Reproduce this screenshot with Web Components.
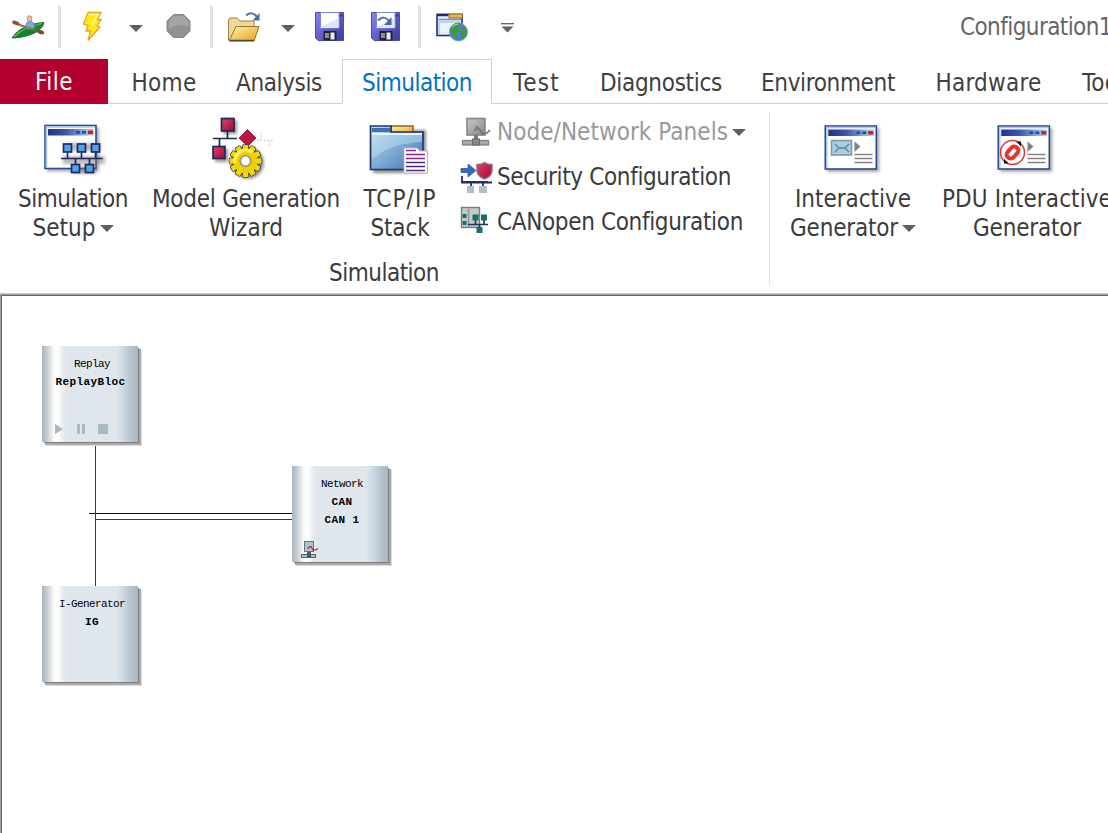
<!DOCTYPE html>
<html lang="en">
<head>
<meta charset="utf-8">
<title>Configuration1</title>
<style>
html,body{margin:0;padding:0;background:#fff}
body{width:1108px;height:833px;overflow:hidden}
</style>
</head>
<body>
<sim-app></sim-app>
<script>
const define = (name, html, init) => {
  const tpl = document.createElement('template');
  tpl.innerHTML = html;
  customElements.define(name, class extends HTMLElement {
    connectedCallback() {
      if (this.shadowRoot) return;
      this.attachShadow({mode: 'open'}).append(tpl.content.cloneNode(true));
      if (init) init(this, this.shadowRoot);
    }
  });
};

/* Text set to a given advance width by tracking. */
define('fit-text', `<style>:host{display:inline-block;white-space:pre;flex:none}span{display:inline-block}</style><span><slot></slot></span>`, (el, root) => {
  const s = root.querySelector('span'), w = +el.getAttribute('w');
  const natural = s.getBoundingClientRect().width;
  s.style.letterSpacing = ((w - natural) / el.textContent.length) + 'px';
  el.style.width = w + 'px';
});

define('drop-arrow', `<style>:host{display:block;flex:none;width:14px;height:7px}svg{display:block}</style><svg width="14" height="7"><path d="M0 0H14L7 7Z" fill="#606060"/></svg>`);
define('bar-separator', `<style>:host{display:block;flex:none;width:3px;height:42px;background:#e1e1e1}</style>`);

const win = (x, y) => `
<rect x="${x+2}" y="${y+2}" width="52" height="44" fill="#555" opacity=".5" filter="url(#b)"/>
<rect x="${x}" y="${y}" width="51" height="43" fill="#fff" stroke="#2a4a94" stroke-width="1.6"/>
<path d="M${x+1.5} ${y+42}V${y+1.5}H${x+50}" fill="none" stroke="#a9c8ee" stroke-width="1.6"/>
<rect x="${x+3}" y="${y+3.5}" width="46" height="6.5" fill="url(#t)"/>
<rect x="${x+31}" y="${y+5.5}" width="4" height="2.6" fill="#1d50a8"/><rect x="${x+37}" y="${y+5.5}" width="4" height="2.6" fill="#1d50a8"/><rect x="${x+43}" y="${y+5}" width="5" height="3.6" fill="#c8281c"/>`;
const defs = `<defs>
<filter id="b" x="-30%" y="-30%" width="160%" height="160%"><feGaussianBlur stdDeviation="1.5"/></filter>
<linearGradient id="t"><stop offset="0" stop-color="#242f8e"/><stop offset=".4" stop-color="#3c58ad"/><stop offset="1" stop-color="#b8dcfb"/></linearGradient>
<linearGradient id="g" x1="0" y1="0" x2="1" y2="1"><stop offset="0" stop-color="#c6e2ee"/><stop offset=".5" stop-color="#7fabd3"/><stop offset="1" stop-color="#3f72af"/></linearGradient>
<linearGradient id="y" x1="0" y1="0" x2="1" y2="1"><stop offset="0" stop-color="#fff3a8"/><stop offset="1" stop-color="#e8a01d"/></linearGradient>
<linearGradient id="r" x1="0" y1="0" x2="1" y2="1"><stop offset="0" stop-color="#d04a6c"/><stop offset="1" stop-color="#b00030"/></linearGradient>
<linearGradient id="p" x1="0" y1="0" x2="1" y2="1"><stop offset="0" stop-color="#8588ee"/><stop offset=".6" stop-color="#5a58c0"/><stop offset="1" stop-color="#3d3a98"/></linearGradient>
<linearGradient id="s" x1="0" y1="0" x2="1" y2="1"><stop offset="0" stop-color="#c9c9c9"/><stop offset="1" stop-color="#858585"/></linearGradient>
</defs>`;
const sq = (x, y, s, f) => `<rect x="${x}" y="${y}" width="${s}" height="${s}" fill="${f}" stroke="#22275c" stroke-width="1.7"/>`;
const floppy = (x, extra) => `<path d="M${x} 12.5H${x+28}V40.500H${x+2.500}L${x} 38Z" fill="url(#p)" stroke="#4c4ab0"/><rect x="${x+5}" y="12.500" width="18.500" height="15.500" fill="#fff" stroke="#7c80d8"/><path d="M${x+5} 27L${x+23} 18V28H${x+5}Z" fill="#dde6f8"/><rect x="${x+8}" y="31" width="13" height="9.500" fill="#23242c"/><rect x="${x+15}" y="32.500" width="4" height="7" fill="#eee"/><rect x="${x+9.500}" y="33" width="4" height="5" fill="#8b8f99"/><rect x="${x+25}" y="14.500" width="2" height="2" fill="#24246a"/>${extra}`;
let teeth = '';
for (let i = 0; i < 12; i++) teeth += `<rect x="242.800" y="145" width="5.400" height="7" rx="1" transform="rotate(${i*30} 245.500 161)"/>`;

const icons = {
kayak: [12, 12, 32, 30, `<path d="M14 23L42 32" stroke="#8d5a36" stroke-width="1.800"/><ellipse cx="16" cy="23" rx="4" ry="1.900" transform="rotate(20 16 23)" fill="#8a5731"/><path d="M12 38C18 28 32 23 44 22.500C42 33 24 38 12 38Z" fill="#17862b" stroke="#185426" stroke-width=".8"/><path d="M14 36.800C22 29 33 25 42 23.500" stroke="#6aba6c" stroke-width="1.200" fill="none"/><path d="M25 27L27 22.500Q30 20.500 33 22.500L35 27Q30 31 25 28Z" fill="#75aee5" stroke="#4779b3" stroke-width=".8"/><ellipse cx="29.600" cy="18.800" rx="2.300" ry="3.100" fill="#e9c7a2" stroke="#8e6b4d" stroke-width=".7"/><path d="M20 25.500L35 29.500" stroke="#a87047" stroke-width="1.700"/><ellipse cx="40.500" cy="32" rx="3.800" ry="2.100" transform="rotate(18 40.500 32)" fill="#86492c"/>`],
bolt: [83, 12, 20, 30, `<path d="M88 12.500H101L97.500 19.500H101L97 26L100 27L88 40.500L90.500 31H86L88 25.500L83.500 24Z" fill="#ffe918" stroke="#e8a51b" stroke-width="1.300"/><path d="M89 14.500H98L92 25" fill="none" stroke="#fffbb5" stroke-width="1.500"/>`],
stop: [167, 14, 24, 24, `<path d="M173.500 14.500H183.500L190 21V31L183.500 37.500H173.500L167 31V21Z" fill="#929292" stroke="#888"/><path d="M174 16H183L188.500 22V27Q178 22 169 29V21Z" fill="#a5a5a5"/>`],
open: [228, 12, 32, 30, `<path d="M228.500 40V20L230 18H237L240 21H254V40Z" fill="#f1d893" stroke="#a18047"/><path d="M229 41L236 26.500H259L254 41Z" fill="url(#y)" stroke="#98722e"/><path d="M230 40.500H254" stroke="#4d4632" stroke-width="1.500"/><path d="M246 15.500Q252 10.500 257 17" fill="none" stroke="#51739f" stroke-width="2"/><path d="M259.500 13V20.500H252.500Z" fill="#4a6e9f"/>`],
save: [315, 12, 30, 30, floppy(315.5, '')],
saveas: [371, 12, 30, 30, floppy(371.5, '<path d="M378 20.500Q384 14.500 389 21" fill="none" stroke="#5470a0" stroke-width="2"/><path d="M391.500 17V25H384Z" fill="#4b679c"/>')],
globe: [435, 12, 34, 30, `<rect x="437" y="14.500" width="25" height="21" fill="#e8f1fc" stroke="#27306f" stroke-width="1.600"/><rect x="449" y="14" width="13.500" height="4" fill="#f2b63b" stroke="#8a6a24"/><path d="M437 15H448" stroke="#1d2a74" stroke-width="2.500"/><path d="M438.500 19.500H461" stroke="#6a94cd" stroke-width="1.500"/><path d="M439 34V22H460" fill="none" stroke="#bdd3ef" stroke-width="2"/><circle cx="458.500" cy="32" r="9" fill="#4b82c6" stroke="#7693b8" stroke-width=".8"/><path d="M451 27Q455 22 460 23L458 27L461 30L457 32L457 39Q452 34 450 31ZM463 26L467 30L466 37L462 39L461 33Z" fill="#3c9a3d"/><path d="M452 27Q455 24 458 24" stroke="#b9dda9" fill="none"/>`],
more: [501, 23, 13, 10, `<path d="M501 23.700H514" stroke="#606060" stroke-width="1.300"/><path d="M501.500 26.500H513.500L507.500 32.500Z" fill="#606060"/>`],
setup: [41, 116, 64, 64, win(45, 125.5) + `<g stroke="#777" opacity=".5" filter="url(#b)" stroke-width="3"><path d="M63 160H105M66 147H101M73 170H96" stroke-width="8"/></g><path d="M61 158.500H102.500M67.500 153V158M81.500 153V158M95.500 153V158M75.500 158V164M89.500 158V164" stroke="#22275c" stroke-width="1.700"/>` + sq(63.5,144,8,'#49a5ec') + sq(77.5,144,8,'#49a5ec') + sq(91.500,144,8,'#49a5ec') + sq(71.500,164.500,8,'#49a5ec') + sq(85.500,164.500,8,'#49a5ec')],
wizard: [214, 116, 64, 64, `<g opacity=".4" filter="url(#b)"><rect x="223" y="120" width="14" height="14"/><rect x="215" y="149" width="13" height="13"/><circle cx="248" cy="163" r="16"/></g><path d="M213 138.500H237M227.500 131V138M219.500 138V146" stroke="#22275c" stroke-width="1.700"/>${sq(221.500,118.500,12.500,'url(#r)')}${sq(213,146.500,12,'url(#r)')}<path d="M247.500 129.500L256 138L247.500 146.500L239 138Z" fill="#b9183e" stroke="#7a1b42" stroke-width=".8"/><path d="M261 132V141M257 140.500H274M269.500 141V148" stroke="#ccc" stroke-width="1.300" stroke-dasharray="1.500 2"/><g fill="#f2d900" stroke="#38355c" stroke-width="1.500">${teeth}<circle cx="245.500" cy="161" r="12.500"/></g><g fill="#f2d900">${teeth}</g><circle cx="245.500" cy="161" r="12" fill="#edd200"/><path d="M235 163A11 11 0 0 1 252 152" fill="none" stroke="#fff35a" stroke-width="3"/><circle cx="245.500" cy="161" r="6" fill="#8a8378"/><circle cx="245.500" cy="161" r="4.500" fill="#fff" stroke="#c8c8d0"/>`],
folder: [368, 116, 64, 64, `<rect x="373" y="130" width="53" height="43" opacity=".45" filter="url(#b)"/><rect x="391" y="126" width="22" height="8" fill="url(#y)" stroke="#8f6419" stroke-width="1.500"/><path d="M370.500 169.500V126H391V132H423V169.500Z" fill="url(#g)" stroke="#23356f" stroke-width="1.700"/><path d="M372 128H390V132H372Z" fill="#416eb2"/><path d="M372 134H422" stroke="#e6f4fc" stroke-width="1.800"/><path d="M372 159Q392 143 422 142V135H372Z" fill="#c3e2f0" opacity=".45"/><path d="M404 173V148H417L420 151H427.500V173Z" fill="#fff" stroke="#b5b5c2"/><path d="M406 150.500H416M406 154.500H425M406 158.500H425" stroke="#8a2583" stroke-width="1.500"/><path d="M406 162.500H425M406 166.500H425M406 170.500H425" stroke="#4c2c79" stroke-width="1.500"/>`],
ig: [821, 116, 64, 64, win(825.3, 126) + `<rect x="831.500" y="140.500" width="20" height="14.500" fill="#a9cde4" stroke="#7d98aa" stroke-width="1.600"/><path d="M835 144L839 148H845L849 144M835 152L839 148M849 152L845 148" fill="none" stroke="#627f94" stroke-width="1.300"/><path d="M854.500 141.500V152L860.500 146.500Z" fill="#808080"/><path d="M854.500 154.500H872.500M854.500 158.500H872.500M854.500 162.500H872.500" stroke="#858585" stroke-width="1.500"/>`],
pdu: [995, 116, 64, 64, win(998.3, 126) + `<path d="M1027.500 141.500V152L1033.500 146.500Z" fill="#808080"/><path d="M1027.500 154.500H1045.500M1027.500 158.500H1045.500M1027.500 162.500H1045.500" stroke="#858585" stroke-width="1.500"/><circle cx="1012.500" cy="152.500" r="12" fill="#fff" stroke="#e83531" stroke-width="1.500"/><rect x="1008.500" y="146" width="8" height="13" rx="3.500" transform="rotate(42 1012.500 152.500)" fill="#fff" stroke="#e83531" stroke-width="4"/><path d="M1016 141.500H1021V146.500ZM1004 159V163.500H1009Z" fill="#111"/>`],
panels: [461, 117, 32, 32, `<rect x="467" y="118.500" width="18" height="16.500" fill="url(#s)" stroke="#858585" stroke-width="1.600"/><path d="M476 135V141" stroke="#777" stroke-width="4"/><rect x="462.500" y="140.500" width="26" height="4.500" fill="#aaa" stroke="#848484" stroke-width="1.300"/><rect x="472.500" y="139" width="7" height="6" fill="#888" stroke="#666"/><path d="M474.500 131L477 127L480 130L483 134L487 133L490 130" fill="none" stroke="#767676" stroke-width="1.700"/>`],
security: [461, 161, 32, 32, `<path d="M461 167.500H468V163L476 169.500L468 176V171.500H461Z" fill="#326bc7" stroke="#2450a4" stroke-width=".7"/><path d="M462 175V181.500H492M462 181H488M471 181V185M483 181V185" fill="none" stroke="#29296f" stroke-width="1.800"/><path d="M477 163.500Q481 164 484.500 161.500Q488 164 492 163.500V169Q492 175 484.500 178Q477 175 477 169Z" fill="url(#r)" stroke="#8b6a7b" stroke-width="1.500"/><rect x="467" y="185" width="7" height="7" fill="#aabfcb"/><rect x="479" y="185" width="8" height="7" fill="#b3bfc7"/>`],
canopen: [461, 206, 32, 32, `<rect x="461.500" y="206.500" width="18" height="20" fill="#c6c9ca" stroke="#777c7d" stroke-width="1.400"/><path d="M468.500 208V226" stroke="#929797" stroke-width="1.500"/><rect x="462.500" y="213" width="4" height="4" fill="#147268"/><rect x="462.500" y="220" width="4" height="4" fill="#147268"/><path d="M468 223.500H488M475.500 218V223M484 218V223M479.500 223V227" stroke="#27305c" stroke-width="1.700"/><rect x="472.500" y="213.500" width="6" height="6" fill="#147268"/><rect x="481" y="213.500" width="6" height="6" fill="#147268"/><rect x="476.500" y="226" width="6" height="6" fill="#147268"/>`],
monitor: [301, 541, 18, 18, `<rect x="304.500" y="541.500" width="9" height="10" fill="#a9c8d6" stroke="#68757c"/><rect x="301.500" y="554.500" width="14" height="3" fill="#a3bfcb" stroke="#59656c"/><path d="M309 552V557" stroke="#4b5960" stroke-width="4"/><path d="M308 549V548L310 546.500H311L313 550H316L318 548.500" fill="none" stroke="#c0172e" stroke-width="1.200"/>`],
transport: [55, 424, 54, 10, `<path d="M55 424V434L63 429Z" fill="#a9b9c3"/><path d="M77 424H80V434H77ZM82 424H85V434H82ZM98 424H108V434H98Z" fill="#a9b9c3"/>`]
};
define('app-icon', `<style>:host{display:block;flex:none}svg{display:block;overflow:visible}</style><svg xmlns="http://www.w3.org/2000/svg"></svg>`, (el, root) => {
  const [x, y, w, h, body] = icons[el.getAttribute('name')], s = root.querySelector('svg');
  s.setAttribute('viewBox', `${x} ${y} ${w} ${h}`);
  s.setAttribute('width', w); s.setAttribute('height', h);
  s.innerHTML = defs + body;
});

define('quick-bar', `<style>
:host{display:flex;align-items:center;height:54px;color:#666;margin-bottom:5px}
</style>
<app-icon name="kayak" style="margin-left:12px"></app-icon>
<bar-separator style="margin-left:14px"></bar-separator>
<app-icon name="bolt" style="margin-left:22px"></app-icon>
<drop-arrow style="margin:3px 0 0 26px"></drop-arrow>
<app-icon name="stop" style="margin:-2px 0 0 24px"></app-icon>
<bar-separator style="margin-left:19px"></bar-separator>
<app-icon name="open" style="margin-left:15px"></app-icon>
<drop-arrow style="margin:3px 0 0 21px"></drop-arrow>
<app-icon name="save" style="margin-left:20px"></app-icon>
<app-icon name="saveas" style="margin-left:26px"></app-icon>
<bar-separator style="margin-left:17px"></bar-separator>
<app-icon name="globe" style="margin-left:14px"></app-icon>
<app-icon name="more" style="margin:2px 0 0 32px"></app-icon>
<fit-text w="152" style="margin-left:446px">Configuration1</fit-text>`);

define('ribbon-tab', `<style>
:host{display:flex;box-sizing:border-box;flex:none;height:45px;line-height:48px;justify-content:center;border-bottom:1px solid #d0d0d0;color:#404040}
:host([kind=file]){background:#b4002e;color:#fff;border-bottom-color:#b4002e;line-height:46px}
:host([kind=active]){color:#0072c6;border:1px solid #d0d0d0;border-bottom-color:#fff;line-height:46px}
</style><slot></slot>`);

define('ribbon-tabs', `<style>
:host{display:flex;height:45px;width:1108px;overflow:hidden}
</style>
<ribbon-tab kind="file" style="width:108px"><fit-text w="38">File</fit-text></ribbon-tab>
<ribbon-tab style="width:112px"><fit-text w="65">Home</fit-text></ribbon-tab>
<ribbon-tab style="width:122px;padding-right:4px"><fit-text w="86">Analysis</fit-text></ribbon-tab>
<ribbon-tab kind="active" style="width:150px"><fit-text w="110">Simulation</fit-text></ribbon-tab>
<ribbon-tab style="width:89px"><fit-text w="47">Test</fit-text></ribbon-tab>
<ribbon-tab style="width:160px"><fit-text w="122">Diagnostics</fit-text></ribbon-tab>
<ribbon-tab style="width:174px"><fit-text w="134">Environment</fit-text></ribbon-tab>
<ribbon-tab style="width:147px"><fit-text w="106">Hardware</fit-text></ribbon-tab>
<ribbon-tab style="width:94px"><fit-text w="54">Tools</fit-text></ribbon-tab>`);

define('ribbon-button', `<style>
:host{display:flex;flex:none;flex-direction:column;align-items:center;line-height:29px;padding-top:12px}
app-icon{margin-bottom:5px}
::slotted(div){display:flex;align-items:center;gap:4px}
</style><app-icon></app-icon><slot></slot>`, (el, root) => {
  const i = document.createElement('app-icon');
  i.setAttribute('name', el.getAttribute('icon'));
  root.querySelector('app-icon').replaceWith(i);
});
/* The icon placeholder is replaced once its name is known. */
icons.null = [0, 0, 0, 0, ''];

define('list-item', `<style>:host{display:flex;align-items:center;height:45px;gap:4px}</style><slot></slot>`);

define('ribbon-body', `<style>
:host{display:flex;height:189px;width:1108px;overflow:hidden;color:#3b3b3b}
.group{display:flex;flex-direction:column;flex:none}
.row{display:flex;height:152px}
.main{width:769px}
.name{line-height:29px;padding-top:3px;padding-left:329px;display:flex}
.list{padding:6px 0 0 7px}
.rule{width:1px;height:173px;margin-top:8px;background:#dedede;flex:none}
</style>
<div class="group main"><div class="row">
<ribbon-button icon="setup" style="width:146px"><fit-text w="110">Simulation</fit-text><div><fit-text w="63">Setup</fit-text><drop-arrow></drop-arrow></div></ribbon-button>
<ribbon-button icon="wizard" style="width:200px"><fit-text w="188">Model Generation</fit-text><fit-text w="74">Wizard</fit-text></ribbon-button>
<ribbon-button icon="folder" style="width:108px"><fit-text w="73">TCP/IP</fit-text><fit-text w="59">Stack</fit-text></ribbon-button>
<div class="list">
<list-item style="color:#999"><app-icon name="panels"></app-icon><fit-text w="231">Node/Network Panels</fit-text><drop-arrow></drop-arrow></list-item>
<list-item><app-icon name="security"></app-icon><fit-text w="234">Security Configuration</fit-text></list-item>
<list-item><app-icon name="canopen"></app-icon><fit-text w="246">CANopen Configuration</fit-text></list-item>
</div></div>
<div class="name"><fit-text w="110">Simulation</fit-text></div></div>
<div class="rule"></div>
<div class="group"><div class="row">
<ribbon-button icon="ig" style="width:166px"><fit-text w="116">Interactive</fit-text><div><fit-text w="108">Generator</fit-text><drop-arrow></drop-arrow></div></ribbon-button>
<ribbon-button icon="pdu" style="width:182px"><fit-text w="170">PDU Interactive</fit-text><fit-text w="108">Generator</fit-text></ribbon-button>
</div></div>`);

define('sim-node', `<style>
:host{position:absolute;display:flex;flex-direction:column;align-items:center;box-sizing:border-box;width:96px;height:96px;padding:9px 0 0 4px;
font:11px/18px "Liberation Mono",monospace;color:#000;
background:linear-gradient(90deg,#a6b4be 0,#c6ced3 5px,#fafbfb 12px,#fff 16px,#eceef0 20px,#e2e6eb 24px,#dfe6ec 30px,#dfe6ec 74px,#c9d7e2 82px,#b6c3cf 89px,#a9b5c2 96px);
box-shadow:1.5px 1.5px 0 -.5px #7e7e7e,3px 3px 0 #a9a9a9,4px 4px 0 #dcdcdc}
::slotted(app-icon){position:absolute}
</style><slot></slot>`);

define('sim-canvas', `<style>
:host{display:block;box-sizing:border-box;position:relative;width:1108px;height:540px;border-top:1px solid #c8c8c8;background:#fff;overflow:hidden}
.frame{height:538px;border-top:1px solid #a0a0a0;border-left:1px solid #a0a0a0}
.inner{height:100%;border-top:1px solid #696969;border-left:1px solid #696969}
.wires{position:absolute;left:0;top:0}
b{font-weight:bold}
</style>
<div class="frame"><div class="inner"></div></div>
<svg class="wires" width="400" height="500"><g shape-rendering="crispEdges"><rect x="89" y="219" width="203" height="1" fill="#000060"/><rect x="95" y="225" width="197" height="1" fill="#a80038"/><rect x="95" y="152" width="1" height="141" fill="#a80038"/></g></svg>
<sim-node style="left:42px;top:52px"><fit-text w="36">Replay</fit-text><b><fit-text w="70" style="margin-right:3px">ReplayBloc</fit-text></b><app-icon name="transport" style="left:13px;top:78px"></app-icon></sim-node>
<sim-node style="left:292px;top:172px"><fit-text w="42">Network</fit-text><b><fit-text w="21">CAN</fit-text></b><b><fit-text w="35">CAN 1</fit-text></b><app-icon name="monitor" style="left:9px;top:75px"></app-icon></sim-node>
<sim-node style="left:42px;top:292px"><fit-text w="66">I-Generator</fit-text><b><fit-text w="14">IG</fit-text></b></sim-node>`);

define('sim-app', `<style>
:host{display:block;width:1108px;height:833px;overflow:hidden;background:#fff;font:24px/29px "DejaVu Sans Condensed","DejaVu Sans",sans-serif;font-stretch:condensed}
</style><quick-bar></quick-bar><ribbon-tabs></ribbon-tabs><ribbon-body></ribbon-body><sim-canvas></sim-canvas>`);
</script>
</body>
</html>
